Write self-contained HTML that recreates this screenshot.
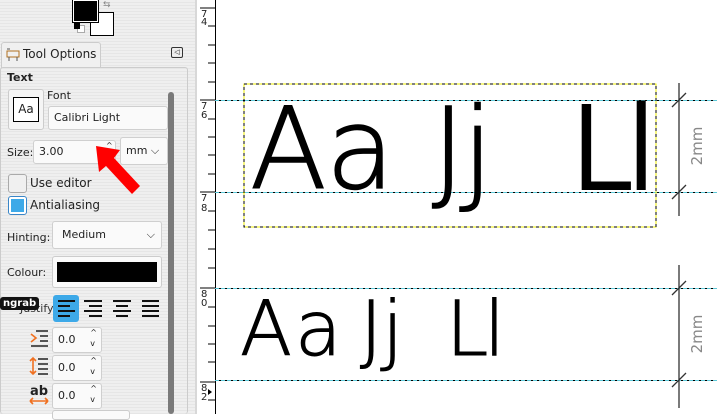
<!DOCTYPE html>
<html><head><meta charset="utf-8"><style>
*{margin:0;padding:0;box-sizing:border-box}
body{width:717px;height:414px;overflow:hidden;position:relative;background:#fff;font-family:"DejaVu Sans","Liberation Sans",sans-serif;font-size:11px;color:#222}
.a{position:absolute}
.stripe{background:repeating-linear-gradient(#efefef 0 2px,#e6e6e6 2px 3px)}
.inp{position:absolute;background:#fafafa;border:1px solid #cfcfcf;border-radius:3px;font-size:11px;padding-left:5px;line-height:22px}
.guide2{position:absolute;left:215px;width:502px;height:1px;background:repeating-linear-gradient(90deg,#5cc8d8 0 4px,#000 4px 6px)}
.big{position:absolute;font-family:"DejaVu Sans","Liberation Sans",sans-serif;font-weight:200;color:#000;line-height:1;-webkit-text-stroke:1.5px #000}
.b1{font-size:112px;top:94px}
.b2{font-size:76px;top:291px;-webkit-text-stroke:1px #000}
</style></head><body>
<div class="a stripe" style="left:0;top:0;width:196px;height:414px"></div>
<div class="a" style="left:195px;top:0;width:2px;height:414px;background:#d8d8d8"></div>
<div class="a" style="left:90px;top:12px;width:24px;height:24px;background:#fff;border:1px solid #000"></div>
<div class="a" style="left:73px;top:0;width:25px;height:22px;background:#000;border:1px solid #fff;outline:1px solid #000"></div>
<div class="a" style="left:77px;top:25px;width:8px;height:8px;background:#fff;border:1px solid #aaa"></div>
<div class="a" style="left:74px;top:23px;width:6px;height:6px;background:#000"></div>
<div class="a" style="left:103px;top:0;font-size:9px;color:#888">⇆</div>
<div class="a" style="left:1px;top:42px;width:100px;height:26px;background:#f0f0f0;border:1px solid #ccc;border-bottom:none;border-radius:3px 3px 0 0"></div>
<div class="a" style="left:5px;top:46px;width:16px;height:16px">
<svg width="16" height="16"><rect x="2" y="5" width="12" height="6" fill="none" stroke="#b07020"/><path d="M4 11v4M12 11v4M2 3h3" stroke="#555" fill="none"/></svg></div>
<div class="a" style="left:23px;top:47px;font-size:12px">Tool Options</div>
<div class="a" style="left:171px;top:47px;width:12px;height:11px;border:1px solid #333;border-radius:2px;font-size:7px;line-height:9px;text-align:center">◁</div>
<div class="a" style="left:0;top:67px;width:188px;height:347px;border:1px solid #ccc;border-bottom:none;border-radius:3px"></div>
<div class="a" style="left:7px;top:71px;font-weight:bold;font-size:11px">Text</div>
<div class="a" style="left:8px;top:89px;width:36px;height:41px;background:#f5f5f5;border:1px solid #ccc;border-radius:3px"></div>
<div class="a" style="left:13px;top:97px;width:26px;height:25px;border:1px solid #000;background:#fff;font-size:12px;text-align:center;line-height:23px">Aa</div>
<div class="a" style="left:47px;top:89px;font-size:11px">Font</div>
<div class="inp" style="left:48px;top:106px;width:120px;height:24px">Calibri Light</div>
<div class="a" style="left:7px;top:146px">Size:</div>
<div class="inp" style="left:33px;top:140px;width:83px;height:24px">3.00</div>
<div class="a" style="left:106px;top:140px;font-size:8px;line-height:11px">^<br>v</div>
<div class="inp" style="left:120px;top:137px;width:48px;height:28px;line-height:26px">mm ⌵</div>
<svg class="a" style="left:90px;top:140px" width="55" height="60"><path d="M6 6 L30 10 L24 18 L50 46 L42 54 L16 26 L9 32 Z" fill="#f00"/></svg>
<div class="a" style="left:8px;top:174px;width:19px;height:19px;background:#f0f0f0;border:1px solid #aaa;border-radius:3px"></div>
<div class="a" style="left:30px;top:176px;font-size:12px">Use editor</div>
<div class="a" style="left:8px;top:196px;width:19px;height:19px;background:#fff;border:1px solid #3a86c8;border-radius:3px"><div style="margin:2px;width:13px;height:13px;background:#3da9e8"></div></div>
<div class="a" style="left:30px;top:198px;font-size:12px">Antialiasing</div>
<div class="a" style="left:7px;top:231px">Hinting:</div>
<div class="inp" style="left:52px;top:221px;width:110px;height:28px;line-height:26px;padding-left:9px">Medium<span style="position:absolute;right:6px">⌵</span></div>
<div class="a" style="left:7px;top:266px">Colour:</div>
<div class="a" style="left:52px;top:256px;width:110px;height:32px;background:#fafafa;border:1px solid #ccc;border-radius:3px"><div style="margin:5px 4px;height:20px;background:#000"></div></div>
<div class="a" style="left:20px;top:302px;color:#333">Justify:</div>
<div class="a" style="left:0;top:297px;background:#111;color:#fff;font-size:10px;font-weight:bold;padding:0 3px;border-radius:3px;line-height:13px">ngrab</div>
<div class="a" style="left:53px;top:295px;width:26px;height:27px;background:#3da9e8;border-radius:3px"></div>
<svg class="a" style="left:55px;top:298px" width="110" height="22"><g stroke="#111" stroke-width="2">
<path d="M3 3h17M3 8h12M3 13h17M3 18h12"/><path d="M29 3h18M34 8h13M29 13h18M34 18h13"/><path d="M58 3h18M61 8h12M58 13h18M61 18h12"/><path d="M87 3h17M87 8h17M87 13h17M87 18h17"/></g></svg>
<svg class="a" style="left:28px;top:328px" width="24" height="80"><g stroke="#222" stroke-width="1.6" fill="none">
<path d="M8 3h12M12 8h8M12 13h8M3 18h17"/><path d="M3 6l5 4-5 4" stroke="#f07020"/>
<path d="M10 31h10M10 36h10M10 41h10M10 46h10"/><path d="M5 30v16M2 33l3-3 3 3M2 43l3 3 3-3" stroke="#f07020"/>
<path d="M2 73h18M2 73l3-3M2 73l3 3M20 73l-3-3M20 73l-3 3" stroke="#f07020"/></g>
<text x="2" y="67" font-size="13" font-weight="bold" font-family="DejaVu Sans" fill="#222">ab</text></svg>
<div class="inp" style="left:52px;top:327px;width:50px;height:26px;line-height:24px">0.0<span style="position:absolute;right:4px;top:-1px;font-size:8px;line-height:11px">^<br>v</span></div>
<div class="inp" style="left:52px;top:355px;width:50px;height:26px;line-height:24px">0.0<span style="position:absolute;right:4px;top:-1px;font-size:8px;line-height:11px">^<br>v</span></div>
<div class="inp" style="left:52px;top:383px;width:50px;height:26px;line-height:24px">0.0<span style="position:absolute;right:4px;top:-1px;font-size:8px;line-height:11px">^<br>v</span></div>
<div class="a" style="left:52px;top:410px;width:78px;height:10px;border:1px solid #ccc;border-radius:3px;background:#fafafa"></div>
<div class="a" style="left:168px;top:92px;width:6px;height:322px;background:#7a7a7a;border-radius:3px"></div>
<svg class="a" style="left:197px;top:0" width="20" height="414">
<rect width="20" height="414" fill="#fff"/>
<line x1="18.5" y1="0" x2="18.5" y2="414" stroke="#000"/>
<g stroke="#000">
<path d="M3 8h16M11 26h8M11 45h8M11 63h8M11 82h8M3 100h16M11 119h8M11 137h8M11 155h8M11 174h8M3 192h16M11 211h8M11 230h8M11 249h8M11 268h8M3 288h16M11 307h8M11 326h8M11 344h8M11 362h8M3 382h16M11 400h8"/></g>
<g font-size="10" font-family="DejaVu Sans" fill="#222">
<text x="4" y="17">7</text><text x="4" y="25">4</text>
<text x="4" y="109">7</text><text x="4" y="118">6</text>
<text x="4" y="201">7</text><text x="4" y="211">8</text>
<text x="4" y="297">8</text><text x="4" y="306">0</text>
<text x="4" y="391">8</text><text x="4" y="400">2</text></g>
<path d="M11 389l4 3-4 3z" fill="#000"/>
</svg>
<div class="guide2" style="top:100px"></div>
<div class="guide2" style="top:192px"></div>
<div class="guide2" style="top:288px"></div>
<div class="guide2" style="top:380px"></div>
<svg class="a" style="left:243px;top:83px" width="415" height="146"><rect x="1" y="1" width="412" height="143" fill="none" stroke="#ee0" stroke-width="1"/><rect x="1" y="1" width="412" height="143" fill="none" stroke="#000" stroke-width="1" stroke-dasharray="3 3"/></svg>
<div class="big b1" style="left:250px">A</div>
<div class="big b1" style="left:326px">a</div>
<div class="big b1" style="left:432px">J</div>
<div class="big b1" style="left:462px">j</div>
<div class="big b1" style="left:570px;-webkit-text-stroke:4px #000">L</div>
<div class="big b1" style="left:626px;-webkit-text-stroke:4px #000">l</div>
<div class="big b2" style="left:240px">A</div>
<div class="big b2" style="left:295px">a</div>
<div class="big b2" style="left:360px">J</div>
<div class="big b2" style="left:382px">j</div>
<div class="big b2" style="left:446px">L</div>
<div class="big b2" style="left:484px">l</div>
<svg class="a" style="left:660px;top:80px" width="57" height="334">
<g stroke="#333" stroke-width="1.3"><path d="M19 3v133M12 27l14-14M12 119l14-14M19 185v143M12 215l14-14M12 307l14-14"/></g>
<text transform="translate(42,66) rotate(-90)" text-anchor="middle" font-size="15" fill="#888" font-family="DejaVu Sans">2mm</text>
<text transform="translate(42,254) rotate(-90)" text-anchor="middle" font-size="15" fill="#888" font-family="DejaVu Sans">2mm</text>
</svg>
</body></html>
